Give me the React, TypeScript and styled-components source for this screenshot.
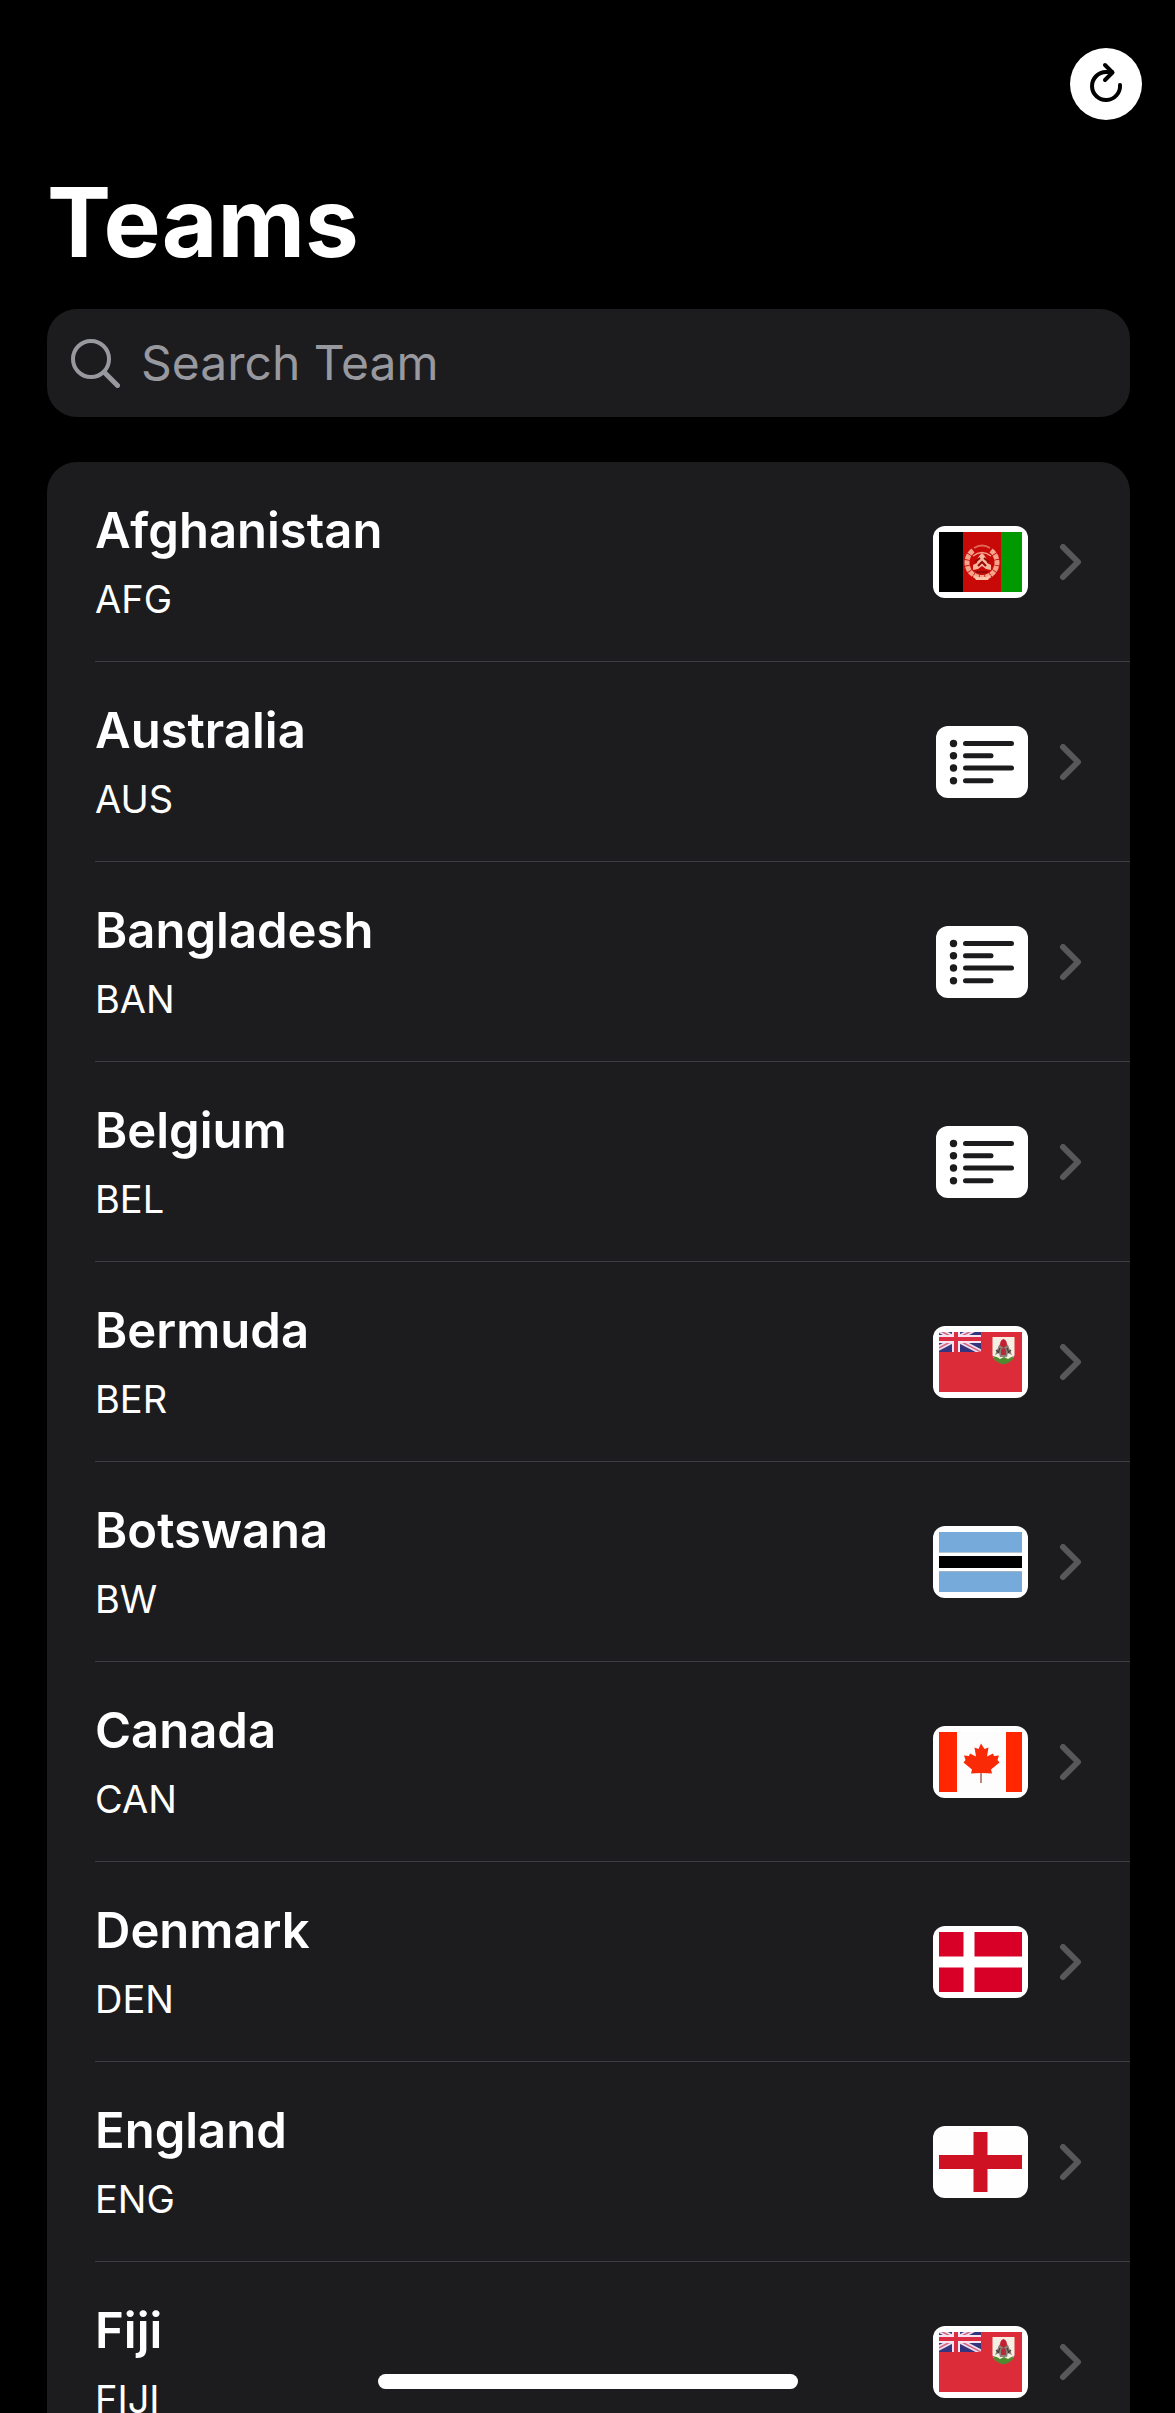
import React, { useState } from "react";
import styled, { createGlobalStyle } from "styled-components";

const GlobalStyle = createGlobalStyle`
  *, *::before, *::after { box-sizing: border-box; }
  body {
    margin: 0;
    background: #000;
    color: #fff;
    font-family: Inter, "Liberation Sans", sans-serif;
  }
`;

const Screen = styled.main`
  display: flex;
  flex-direction: column;
  height: 100vh;
  overflow: hidden;
`;

const Toolbar = styled.header`
  display: flex;
  justify-content: flex-end;
  padding: 48px 33px 42px;
`;

const RefreshButton = styled.button`
  display: flex;
  width: 72px;
  height: 72px;
  padding: 0;
  border: 0;
  border-radius: 50%;
  background: #fff;
  color: #000;
  cursor: pointer;
`;

const Content = styled.div`
  display: flex;
  flex: 1;
  flex-direction: column;
  min-height: 0;
  padding: 0 45px 0 47px;
`;

const Title = styled.h1`
  margin: 0 0 27px;
  font-size: 96px;
  font-weight: 700;
  line-height: 120px;
`;

const SearchField = styled.label`
  display: flex;
  flex: none;
  align-items: center;
  gap: 21px;
  height: 108px;
  margin-bottom: 45px;
  padding: 0 24px;
  border-radius: 30px;
  background: #1c1c1e;
  color: #98989f;
`;

const SearchInput = styled.input`
  flex: 1;
  min-width: 0;
  height: 60px;
  padding: 0;
  border: 0;
  outline: 0;
  background: transparent;
  color: #fff;
  font: 400 48px/60px Inter, "Liberation Sans", sans-serif;
  &::placeholder { color: #98989f; opacity: 1; }
`;

const TeamList = styled.ul`
  flex: 1;
  min-height: 0;
  margin: 0;
  padding: 0;
  overflow-y: auto;
  scrollbar-width: none;
  list-style: none;
  border-radius: 30px 30px 0 0;
  background: #1c1c1e;
`;

const TeamItem = styled.li`
  padding-left: 48px;
`;

const TeamLink = styled.a`
  display: flex;
  align-items: center;
  height: 200px;
  padding-right: 48px;
  border-bottom: 1px solid #3d3d41;
  color: inherit;
  text-decoration: none;
`;

const TeamText = styled.div`
  display: flex;
  flex: 1;
  flex-direction: column;
  gap: 14px;
  min-width: 0;
`;

const TeamName = styled.span`
  font-size: 49px;
  font-weight: 600;
  line-height: 60px;
`;

const TeamCode = styled.span`
  font-size: 38px;
  line-height: 48px;
`;

const Thumb = styled.span<{ $plain?: boolean }>`
  display: flex;
  justify-content: center;
  align-items: center;
  width: ${(p) => (p.$plain ? 92 : 95)}px;
  height: 72px;
  margin-right: 30px;
  border-radius: 12px;
  background: #fff;
`;

const HomeIndicator = styled.div`
  position: fixed;
  right: 0;
  bottom: 24px;
  left: 0;
  width: 420px;
  height: 15px;
  margin: 0 auto;
  border-radius: 8px;
  background: #fff;
`;

function FlagFrame({ children }: { children: React.ReactNode }) {
  return (
    <svg width="83" height="60" viewBox="0 0 83 60" aria-hidden="true">
      {children}
    </svg>
  );
}

function AfghanistanFlag() {
  return (
    <FlagFrame>
      <rect width="83" height="60" fill="#c70a08" />
      <rect width="24" height="60" fill="#000" />
      <rect x="62" width="21" height="60" fill="#090" />
      <g fill="none" stroke="#f5a48c">
        <path d="M34 18.500A15 15 0 1 0 52 18.500" strokeWidth="5" strokeDasharray="5 0.800" />
        <path d="M35 16q8-5 16 0" strokeWidth="2" stroke="#e26a58" />
        <path d="M34 24q9-7 18 0" strokeWidth="1.500" />
      </g>
      <path d="M34 38v-5l4-2q0-6 5-10q5 4 5 10l4 2v5l-5-1-4-3-4 3z" fill="#f9b59b" />
      <path d="M36 30l5-4M50 30l-5-4M39 34l4-4 4 4M37 40h12" fill="none" stroke="#950907" strokeWidth="2" />
      <path d="M34 43l5 2h8l5-2-3 5H37z" fill="#ffc3a8" />
    </FlagFrame>
  );
}

function BermudaFlag() {
  return (
    <FlagFrame>
      <rect width="83" height="60" fill="#dc2c39" />
      <svg width="42" height="20" viewBox="0 0 42 20">
        <rect width="42" height="20" fill="#35347f" />
        <path d="M-8-6L42 20M42-6L-8 20" stroke="#ecdcee" strokeWidth="5" />
        <path d="M-8-6L42 20M42-6L-8 20" stroke="#d9607c" strokeWidth="1.500" />
        <path d="M17 0v20M0 7h42" stroke="#f7e4ee" strokeWidth="8" />
        <path d="M17 0v20M0 7h42" stroke="#dc2c43" strokeWidth="4" />
      </svg>
      <path d="M53.500 5h22v18q0 5-11 9q-11-4-11-9z" fill="#f5eee2" />
      <path d="M54 24q5 1 7 3l4-2 4 2q3-2 6-3q-1 6-10.500 8.500Q55 30 54 24z" fill="#4f8a2e" />
      <path d="M56 23l4-10 3-2h3l3 2 4 10-4-2-1 4h-7l-1-4z" fill="#8b8177" />
      <path d="M61 13q0-5 3.500-6q3.500 1 3.500 6l-2 2h-3z" fill="#c51f34" />
      <path d="M62 18l2.500-3 2.500 3v5h-5z" fill="#b92b3a" />
      <path d="M57 18l3 3M72 18l-3 3M61 16l-2 5M68 16l2 5" stroke="#453f3d" strokeWidth="1.200" />
    </FlagFrame>
  );
}

function BotswanaFlag() {
  return (
    <FlagFrame>
      <rect width="83" height="60" fill="#75aadb" />
      <rect y="20" width="83" height="20" fill="#fff" />
      <rect y="20" width="83" height="1" fill="#b5c5d2" />
      <rect y="39" width="83" height="1" fill="#9fb5c7" />
      <rect y="24" width="83" height="12" fill="#000" />
    </FlagFrame>
  );
}

function CanadaFlag() {
  return (
    <FlagFrame>
      <rect width="83" height="60" fill="#fdfdfd" />
      <rect width="18" height="60" fill="#ff2600" />
      <rect x="67" width="16" height="60" fill="#ff2600" />
      <path
        d="M42 11.500l3.500 5.500 4-1.500-1.500 9 6-3 1 2.500 5-0.500-1.500 4.500 2 2.500-8.500 7 1 4-10-0.500h-1l-10 0.500 1-4-8.500-7 2-2.500-1.500-4.500 5 0.500 1-2.500 6 3-1.500-9 4 1.500z"
        fill="#fa2a06"
      />
      <path d="M42 41v10" stroke="#b9897f" strokeWidth="2" />
    </FlagFrame>
  );
}

function DenmarkFlag() {
  return (
    <FlagFrame>
      <rect width="83" height="60" fill="#d80027" />
      <path d="M30 0v60M0 30h83" stroke="#fff" strokeWidth="11" />
    </FlagFrame>
  );
}

function EnglandFlag() {
  return (
    <FlagFrame>
      <rect width="83" height="60" fill="#fefefe" />
      <path d="M41.500 0v60M0 30h83" stroke="#cf1124" strokeWidth="14" />
    </FlagFrame>
  );
}

function ListIcon() {
  return (
    <svg width="92" height="72" viewBox="0 0 92 72" aria-hidden="true">
      <g fill="#1c1c1e">
        <circle cx="17.500" cy="17.500" r="3.700" />
        <circle cx="17.500" cy="29.700" r="3.700" />
        <circle cx="17.500" cy="42" r="3.700" />
        <circle cx="17.500" cy="54.700" r="3.700" />
      </g>
      <path
        d="M29.500 17.400H75.500M29.500 29.700H55M29.500 42H75.500M29.500 54.700H55"
        stroke="#1c1c1e"
        strokeWidth="5"
        strokeLinecap="round"
      />
    </svg>
  );
}

function RefreshIcon() {
  return (
    <svg width="72" height="72" viewBox="0 0 72 72" fill="none" stroke="currentColor" strokeWidth="4" strokeLinecap="round" strokeLinejoin="round" aria-hidden="true">
      <path d="M50 37A14 14 0 1 1 36 24h6" />
      <path d="M35 17l7.500 7.500L35 32" />
    </svg>
  );
}

function SearchIcon() {
  return (
    <svg width="49" height="49" viewBox="0 0 49 49" fill="none" stroke="currentColor" strokeLinecap="round" aria-hidden="true">
      <circle cx="20" cy="20" r="18" strokeWidth="4" />
      <path d="M33.500 33.500L46.500 46.500" strokeWidth="5" />
    </svg>
  );
}

function Chevron() {
  return (
    <svg width="24" height="36" viewBox="0 0 24 36" fill="none" stroke="#58585b" strokeWidth="6" strokeLinecap="round" strokeLinejoin="round" aria-hidden="true">
      <path d="M5 3l15 15L5 33" />
    </svg>
  );
}

interface Team {
  name: string;
  code: string;
  Flag?: () => React.JSX.Element;
}

const teams: Team[] = [
  { name: "Afghanistan", code: "AFG", Flag: AfghanistanFlag },
  { name: "Australia", code: "AUS" },
  { name: "Bangladesh", code: "BAN" },
  { name: "Belgium", code: "BEL" },
  { name: "Bermuda", code: "BER", Flag: BermudaFlag },
  { name: "Botswana", code: "BW", Flag: BotswanaFlag },
  { name: "Canada", code: "CAN", Flag: CanadaFlag },
  { name: "Denmark", code: "DEN", Flag: DenmarkFlag },
  { name: "England", code: "ENG", Flag: EnglandFlag },
  { name: "Fiji", code: "FIJI", Flag: BermudaFlag },
];

export default function App() {
  const [query, setQuery] = useState("");
  const visible = teams.filter((t) => t.name.toLowerCase().includes(query.toLowerCase()));

  return (
    <Screen>
      <GlobalStyle />
      <Toolbar>
        <RefreshButton type="button" aria-label="Refresh" onClick={() => setQuery("")}>
          <RefreshIcon />
        </RefreshButton>
      </Toolbar>
      <Content>
        <Title>Teams</Title>
        <SearchField>
          <SearchIcon />
          <SearchInput
            aria-label="Search Team"
            placeholder="Search Team"
            value={query}
            onChange={(e) => setQuery(e.target.value)}
          />
        </SearchField>
        <TeamList>
          {visible.map(({ name, code, Flag }) => (
            <TeamItem key={name}>
              <TeamLink href={`#${code}`}>
                <TeamText>
                  <TeamName>{name}</TeamName>
                  <TeamCode>{code}</TeamCode>
                </TeamText>
                <Thumb $plain={!Flag}>{Flag ? <Flag /> : <ListIcon />}</Thumb>
                <Chevron />
              </TeamLink>
            </TeamItem>
          ))}
        </TeamList>
      </Content>
      <HomeIndicator />
    </Screen>
  );
}
